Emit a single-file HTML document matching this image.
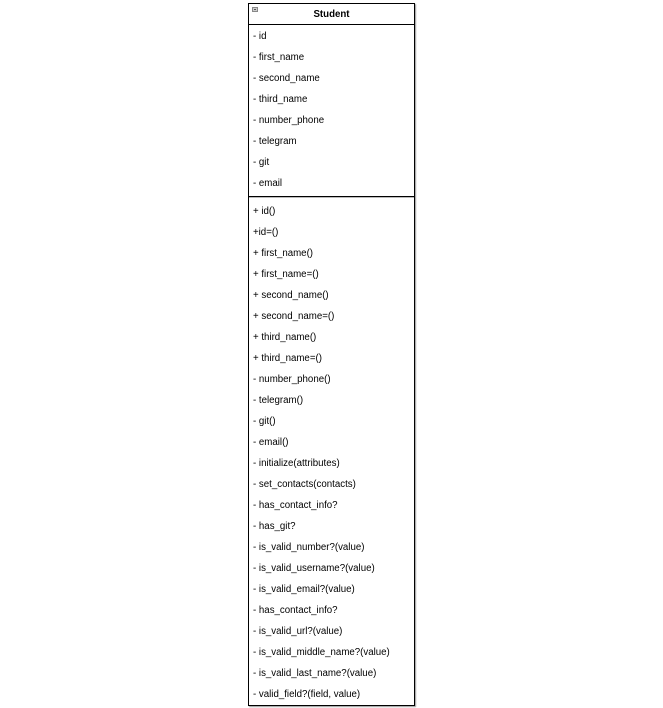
<!DOCTYPE html>
<html><head><meta charset="utf-8"><style>
body{margin:0;width:663px;height:708px;background:#fff;font-family:"Liberation Sans",Arial,sans-serif;font-size:9.7px;color:#000;position:relative;overflow:hidden}
.box{position:absolute;left:248px;top:3px;width:165px;height:701px;border:1px solid #000;box-shadow:1px 1px 1px #999;}
.hdr{position:absolute;left:0;top:0;width:165px;height:20px;border-bottom:1px solid #000;text-align:center;font-weight:bold;line-height:22px}
.ic{position:absolute;left:3px;top:3px;width:6px;height:5px;background:#ccc;border:1px solid #888;box-sizing:border-box}
.ic:after{content:"";position:absolute;left:1px;top:1px;width:2px;height:1px;background:#555}
.sep{position:absolute;left:0;top:192px;width:165px;height:0;border-top:1px solid #000;box-shadow:0 1px 0 #bbb}
.r{position:absolute;left:4px;white-space:nowrap;line-height:12px;margin-top:1px}
</style></head><body>
<div class="box">
<div class="hdr"><div class="ic"></div>Student</div>
<div class="sep"></div>
<div class="r" style="top:26px">- id</div>
<div class="r" style="top:47px">- first_name</div>
<div class="r" style="top:68px">- second_name</div>
<div class="r" style="top:89px">- third_name</div>
<div class="r" style="top:110px">- number_phone</div>
<div class="r" style="top:131px">- telegram</div>
<div class="r" style="top:152px">- git</div>
<div class="r" style="top:173px">- email</div>
<div class="r" style="top:201px">+ id()</div>
<div class="r" style="top:222px">+id=()</div>
<div class="r" style="top:243px">+ first_name()</div>
<div class="r" style="top:264px">+ first_name=()</div>
<div class="r" style="top:285px">+ second_name()</div>
<div class="r" style="top:306px">+ second_name=()</div>
<div class="r" style="top:327px">+ third_name()</div>
<div class="r" style="top:348px">+ third_name=()</div>
<div class="r" style="top:369px">- number_phone()</div>
<div class="r" style="top:390px">- telegram()</div>
<div class="r" style="top:411px">- git()</div>
<div class="r" style="top:432px">- email()</div>
<div class="r" style="top:453px">- initialize(attributes)</div>
<div class="r" style="top:474px">- set_contacts(contacts)</div>
<div class="r" style="top:495px">- has_contact_info?</div>
<div class="r" style="top:516px">- has_git?</div>
<div class="r" style="top:537px">- is_valid_number?(value)</div>
<div class="r" style="top:558px">- is_valid_username?(value)</div>
<div class="r" style="top:579px">- is_valid_email?(value)</div>
<div class="r" style="top:600px">- has_contact_info?</div>
<div class="r" style="top:621px">- is_valid_url?(value)</div>
<div class="r" style="top:642px">- is_valid_middle_name?(value)</div>
<div class="r" style="top:663px">- is_valid_last_name?(value)</div>
<div class="r" style="top:684px">- valid_field?(field, value)</div>
</div>
</body></html>
